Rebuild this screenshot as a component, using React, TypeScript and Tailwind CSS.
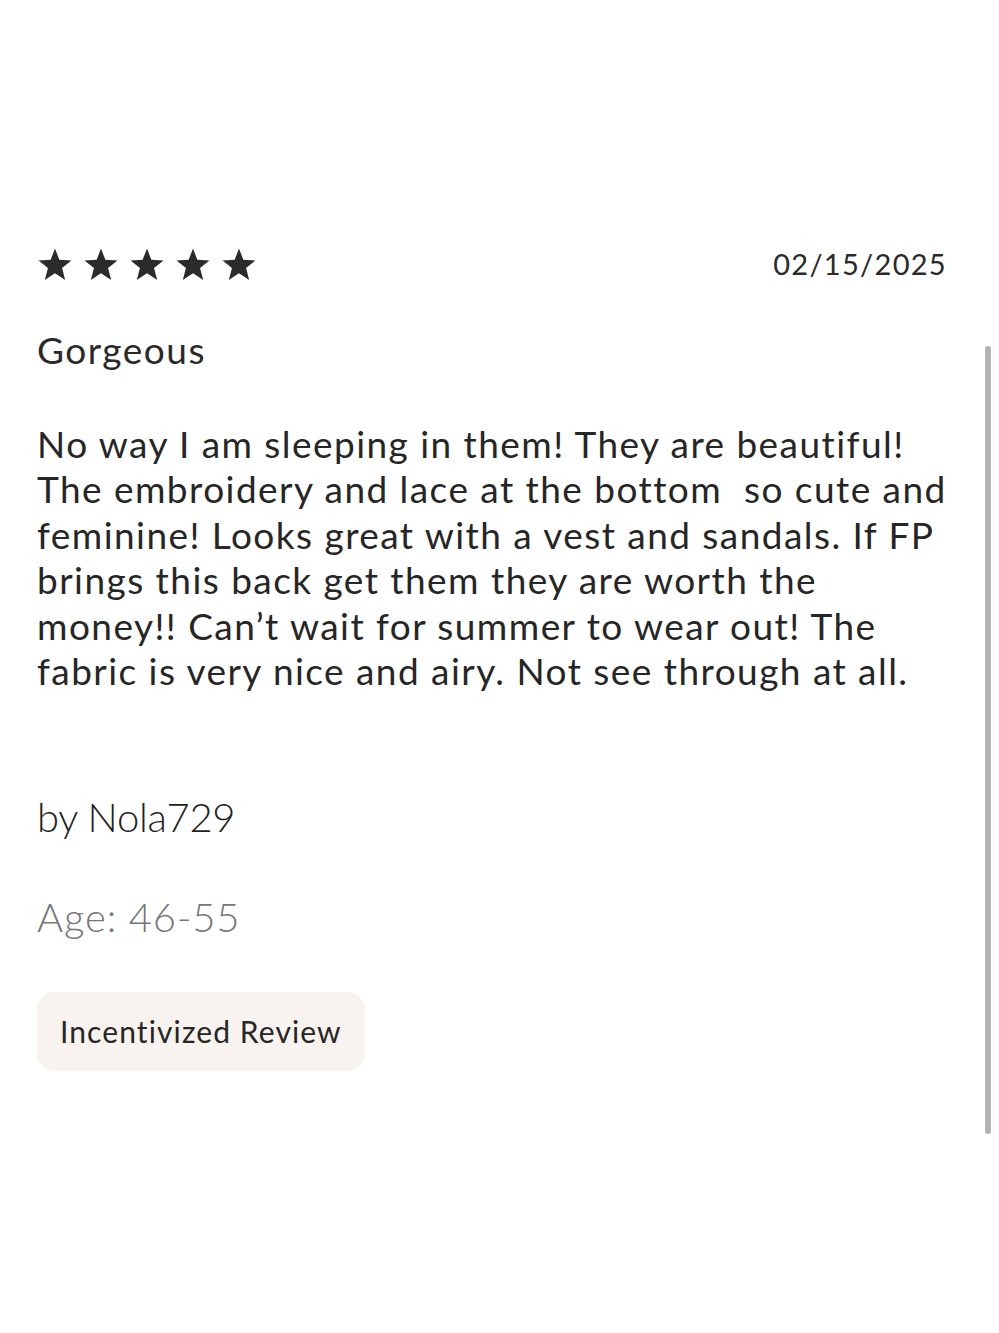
import React from "react";

const Star = () => (
  <svg viewBox="0 0 24 24" className="w-[36px] h-[36px]" fill="#2b2b2b">
    <path d="M12 1.6l2.9 7.6 8.1.4-6.3 5.1 2.1 7.9L12 18.1l-6.8 4.5 2.1-7.9L1 9.6l8.1-.4z" />
  </svg>
);

export default function App() {
  return (
    <div className="relative min-h-[1333px] w-[999px] bg-white font-['Lato','Liberation_Sans',sans-serif] text-[#262626]">
      <div className="px-[37px] pt-[242px] pr-[52px]">
        <div className="flex items-center justify-between">
          <div className="flex gap-[10px]">
            <Star />
            <Star />
            <Star />
            <Star />
            <Star />
          </div>
          <div className="text-[29px] tracking-[1.3px] text-[#2a2a2a]">02/15/2025</div>
        </div>

        <h2 className="mt-[42px] text-[37px] leading-[44px] tracking-[1.5px] text-[#2a2a2a]">Gorgeous</h2>

        <p className="mt-[49px] text-[37px] leading-[45.5px] tracking-[1.45px] text-[#262626] whitespace-pre-wrap">
          {"No way I am sleeping in them! They are beautiful!\nThe embroidery and lace at the bottom  so cute and\nfeminine! Looks great with a vest and sandals. If FP\nbrings this back get them they are worth the\nmoney!! Can’t wait for summer to wear out! The\nfabric is very nice and airy. Not see through at all."}
        </p>

        <div className="mt-[98px] text-[40px] font-light leading-[50px] text-[#1f1f1f] tracking-[-0.3px]">by Nola729</div>
        <div className="mt-[50px] text-[40px] font-light leading-[50px] text-[#777777] tracking-[0.8px]">Age: 46-55</div>

        <div className="mt-[50px] inline-flex h-[79px] items-center rounded-[18px] bg-[#f8f3ef] px-[23px] text-[30px] tracking-[1.1px] text-[#262626]">
          Incentivized Review
        </div>
      </div>

      <div className="absolute left-[985px] top-[346px] h-[788px] w-[6px] rounded-full bg-[#b3b3b3]" />
    </div>
  );
}
